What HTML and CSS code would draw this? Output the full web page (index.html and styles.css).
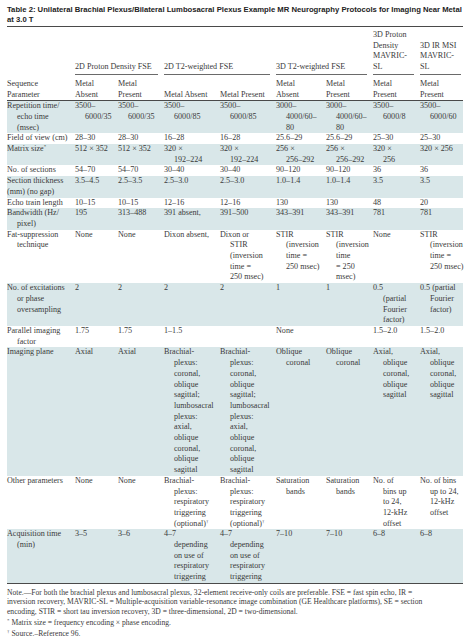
FILE: index.html
```html
<!DOCTYPE html>
<html>
<head>
<meta charset="utf-8">
<link rel="stylesheet" href="styles.css">
</head>
<body>
<div class="page">
  <h1 class="title">Table 2: Unilateral Brachial Plexus/Bilateral Lumbosacral Plexus Example MR Neurography Protocols for Imaging Near Metal<br>at 3.0 T</h1>
  <table class="tbl">
    <colgroup>
      <col class="w-lab"><col class="w-c1"><col class="w-c2"><col class="w-c3"><col class="w-c4"><col class="w-c5"><col class="w-c6"><col class="w-c7"><col class="w-c8">
    </colgroup>
    <thead>
      <tr class="grp">
        <th></th>
        <th colspan="2"><div class="u">2D Proton Density FSE</div></th>
        <th colspan="2"><div class="u">2D T2-weighted FSE</div></th>
        <th colspan="2"><div class="u">3D T2-weighted FSE</div></th>
        <th><div class="u">3D Proton<br>Density<br>MAVRIC-<br>SL</div></th>
        <th><div class="u u-last">3D IR MSI<br>MAVRIC-<br>SL</div></th>
      </tr>
      <tr class="sub">
        <th>Sequence<br>Parameter</th>
        <th>Metal<br>Absent</th>
        <th>Metal<br>Present</th>
        <th>Metal Absent</th>
        <th>Metal Present</th>
        <th>Metal<br>Absent</th>
        <th>Metal<br>Present</th>
        <th>Metal<br>Present</th>
        <th>Metal<br>Present</th>
      </tr>
    </thead>
    <tbody>
      <tr class="sh">
        <td>Repetition time/<br>echo time<br>(msec)</td>
        <td>3500–<br>6000/35</td><td>3500–<br>6000/35</td><td>3500–<br>6000/85</td><td>3500–<br>6000/85</td>
        <td>3000–<br>4000/60–<br>80</td><td>3000–<br>4000/60–<br>80</td><td>3500–<br>6000/8</td><td>3500–<br>6000/60</td>
      </tr>
      <tr>
        <td>Field of view (cm)</td>
        <td>28–30</td><td>28–30</td><td>16–28</td><td>16–28</td><td>25.6–29</td><td>25.6–29</td><td>25–30</td><td>25–30</td>
      </tr>
      <tr class="sh">
        <td>Matrix size<sup>*</sup></td>
        <td>512 × 352</td><td>512 × 352</td><td>320 ×<br>192–224</td><td>320 ×<br>192–224</td><td>256 ×<br>256–292</td><td>256 ×<br>256–292</td><td>320 ×<br>256</td><td>320 × 256</td>
      </tr>
      <tr>
        <td>No. of sections</td>
        <td>54–70</td><td>54–70</td><td>30–40</td><td>30–40</td><td>90–120</td><td>90–120</td><td>36</td><td>36</td>
      </tr>
      <tr class="sh">
        <td><div class="flat">Section thickness<br>(mm) (no gap)</div></td>
        <td>3.5–4.5</td><td>2.5–3.5</td><td>2.5–3.0</td><td>2.5–3.0</td><td>1.0–1.4</td><td>1.0–1.4</td><td>3.5</td><td>3.5</td>
      </tr>
      <tr>
        <td>Echo train length</td>
        <td>10–15</td><td>10–15</td><td>12–16</td><td>12–16</td><td>130</td><td>130</td><td>48</td><td>20</td>
      </tr>
      <tr class="sh">
        <td>Bandwidth (Hz/<br>pixel)</td>
        <td>195</td><td>313–488</td><td>391 absent,</td><td>391–500</td><td>343–391</td><td>343–391</td><td>781</td><td>781</td>
      </tr>
      <tr>
        <td>Fat-suppression<br>technique</td>
        <td>None</td><td>None</td><td>Dixon absent,</td><td>Dixon or<br>STIR<br>(inversion<br>time =<br>250 msec)</td>
        <td>STIR<br>(inversion<br>time =<br>250 msec)</td><td>STIR<br>(inversion<br>time<br>= 250<br>msec)</td><td>None</td><td>STIR<br>(inversion<br>time =<br>250 msec)</td>
      </tr>
      <tr class="sh">
        <td>No. of excitations<br>or phase<br>oversampling</td>
        <td>2</td><td>2</td><td>2</td><td>2</td><td>1</td><td>1</td><td>0.5<br>(partial<br>Fourier<br>factor)</td><td>0.5 (partial<br>Fourier<br>factor)</td>
      </tr>
      <tr>
        <td>Parallel imaging<br>factor</td>
        <td>1.75</td><td>1.75</td><td>1–1.5</td><td></td><td>None</td><td></td><td>1.5–2.0</td><td>1.5–2.0</td>
      </tr>
      <tr class="sh">
        <td>Imaging plane</td>
        <td>Axial</td><td>Axial</td>
        <td>Brachial-<br>plexus:<br>coronal,<br>oblique<br>sagittal;<br>lumbosacral<br>plexus:<br>axial,<br>oblique<br>coronal,<br>oblique<br>sagittal</td>
        <td>Brachial-<br>plexus:<br>coronal,<br>oblique<br>sagittal;<br>lumbosacral<br>plexus:<br>axial,<br>oblique<br>coronal,<br>oblique<br>sagittal</td>
        <td>Oblique<br>coronal</td><td>Oblique<br>coronal</td>
        <td>Axial,<br>oblique<br>coronal,<br>oblique<br>sagittal</td><td>Axial,<br>oblique<br>coronal,<br>oblique<br>sagittal</td>
      </tr>
      <tr>
        <td>Other parameters</td>
        <td>None</td><td>None</td>
        <td>Brachial-<br>plexus:<br>respiratory<br>triggering<br>(optional)<sup>†</sup></td>
        <td>Brachial-<br>plexus:<br>respiratory<br>triggering<br>(optional)<sup>†</sup></td>
        <td>Saturation<br>bands</td><td>Saturation<br>bands</td>
        <td>No. of<br>bins up<br>to 24,<br>12-kHz<br>offset</td><td>No. of bins<br>up to 24,<br>12-kHz<br>offset</td>
      </tr>
      <tr class="sh last">
        <td>Acquisition time<br>(min)</td>
        <td>3–5</td><td>3–6</td>
        <td>4–7<br>depending<br>on use of<br>respiratory<br>triggering</td>
        <td>4–7<br>depending<br>on use of<br>respiratory<br>triggering</td>
        <td>7–10</td><td>7–10</td><td>6–8</td><td>6–8</td>
      </tr>
    </tbody>
  </table>
  <div class="notes">
    <p>Note.—For both the brachial plexus and lumbosacral plexus, 32-element receive-only coils are preferable. FSE = fast spin echo, IR =<br>inversion recovery, MAVRIC-SL = Multiple-acquisition variable-resonance image combination (GE Healthcare platforms), SE = section<br>encoding, STIR = short tau inversion recovery, 3D = three-dimensional, 2D = two-dimensional.</p>
    <p><sup>*</sup> Matrix size = frequency encoding × phase encoding.</p>
    <p><sup>†</sup> Source.–Reference 96.</p>
  </div>
</div>
</body>
</html>
```

FILE: styles.css
```css
html, body {
  margin: 0;
  padding: 0;
  background: #ffffff;
}

.page {
  padding: 5px 0 0 7px;
  width: 456px;
  font-family: "Liberation Serif", "Times New Roman", serif;
  color: #3a3a3a;
}

.title {
  margin: 0 0 1px 0;
  font-family: "Liberation Sans", Arial, sans-serif;
  font-weight: 700;
  font-size: 7.7px;
  line-height: 10px;
  color: #232323;
  white-space: nowrap;
}

.tbl {
  width: 456px;
  table-layout: fixed;
  border-collapse: collapse;
  font-size: 8.1px;
  line-height: 10.7px;
  border-top: 1px solid #4a4a4a;
}

.w-lab { width: 68px; }
.w-c1 { width: 43px; }
.w-c2 { width: 46px; }
.w-c3 { width: 56px; }
.w-c4 { width: 56px; }
.w-c5 { width: 50px; }
.w-c6 { width: 47px; }
.w-c7 { width: 47px; }
.w-c8 { width: 43px; }

.tbl th {
  font-weight: 400;
  text-align: left;
  vertical-align: bottom;
  white-space: nowrap;
  padding: 0;
}

.grp th {
  padding-top: 3px;
}

.grp .u {
  border-bottom: 1px solid #6a6a6a;
  margin-right: 6px;
  padding-bottom: 1px;
}

.grp .u-last {
  margin-right: 2px;
}

.sub th {
  padding-top: 4px;
  padding-bottom: 0;
  border-bottom: 1px solid #4a4a4a;
}

.tbl td {
  vertical-align: top;
  text-align: left;
  white-space: nowrap;
  padding: 0 0 0 10px;
  text-indent: -10px;
}

.tbl td .flat {
  margin-left: -10px;
  text-indent: 0;
}

.tbl tr.sh td {
  background: #d9e7e9;
}

.tbl tr.last td {
  border-bottom: 1px solid #4a4a4a;
}

.tbl sup {
  font-size: 5px;
  line-height: 0;
  vertical-align: 3px;
}

.notes {
  padding-top: 4px;
  font-size: 7.6px;
  line-height: 9.5px;
  white-space: nowrap;
}

.notes p {
  margin: 0 0 1.5px 0;
}

.notes sup {
  font-size: 5px;
  line-height: 0;
  vertical-align: 3px;
}
```
